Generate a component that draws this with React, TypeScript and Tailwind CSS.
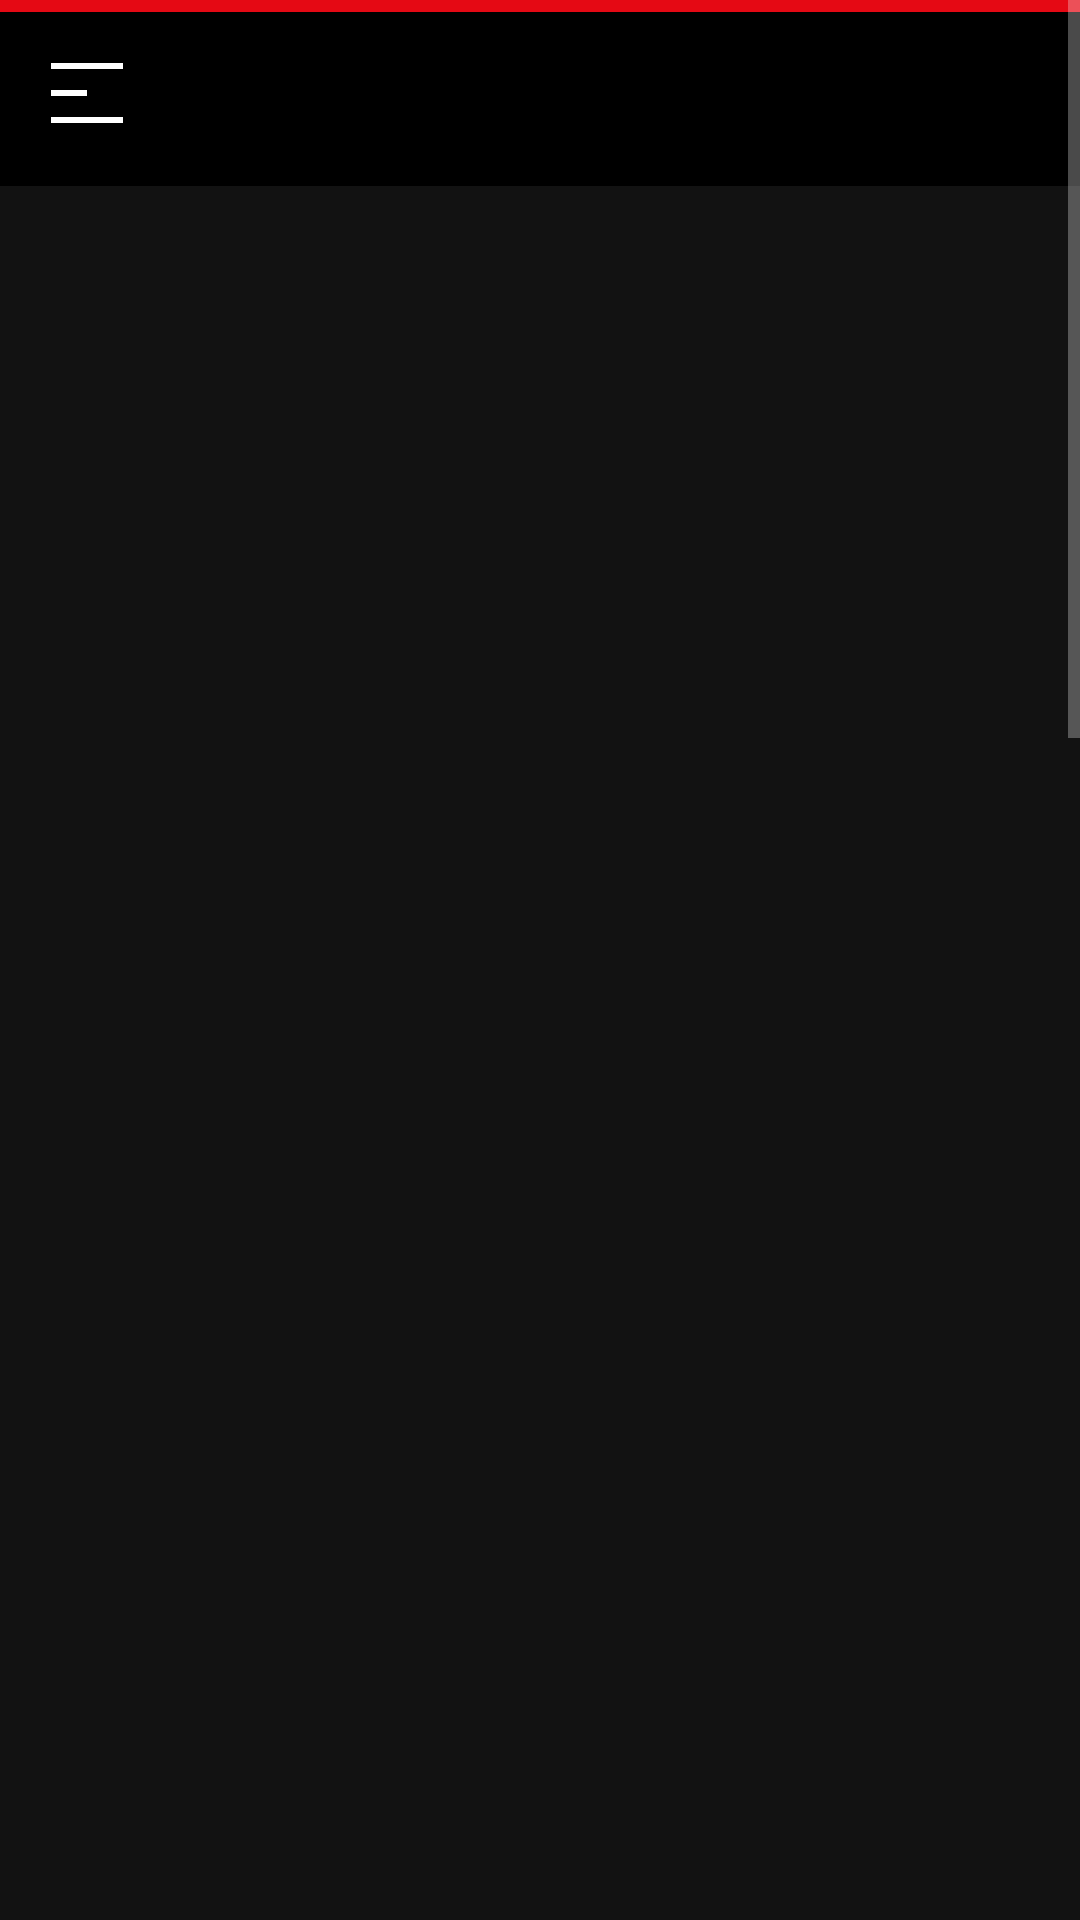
import React from 'react';

const App: React.FC = () => {
    return (
        <div className="relative min-h-[1920px] w-full bg-[#121212] overflow-hidden">
            <div className="h-[12px] bg-[#e50914]" />
            <header className="h-[174px] bg-black">
                <button className="flex flex-col gap-[21px] pl-[51px] pt-[51px]" aria-label="Menu">
                    <span className="block h-[6px] w-[72px] bg-white" />
                    <span className="block h-[6px] w-[36px] bg-white" />
                    <span className="block h-[6px] w-[72px] bg-white" />
                </button>
            </header>
            {/* scrollbar thumb */}
            <div className="absolute right-0 top-0 h-[738px] w-[12px] bg-white/[0.29]" />
        </div>
    );
};

export default App;
